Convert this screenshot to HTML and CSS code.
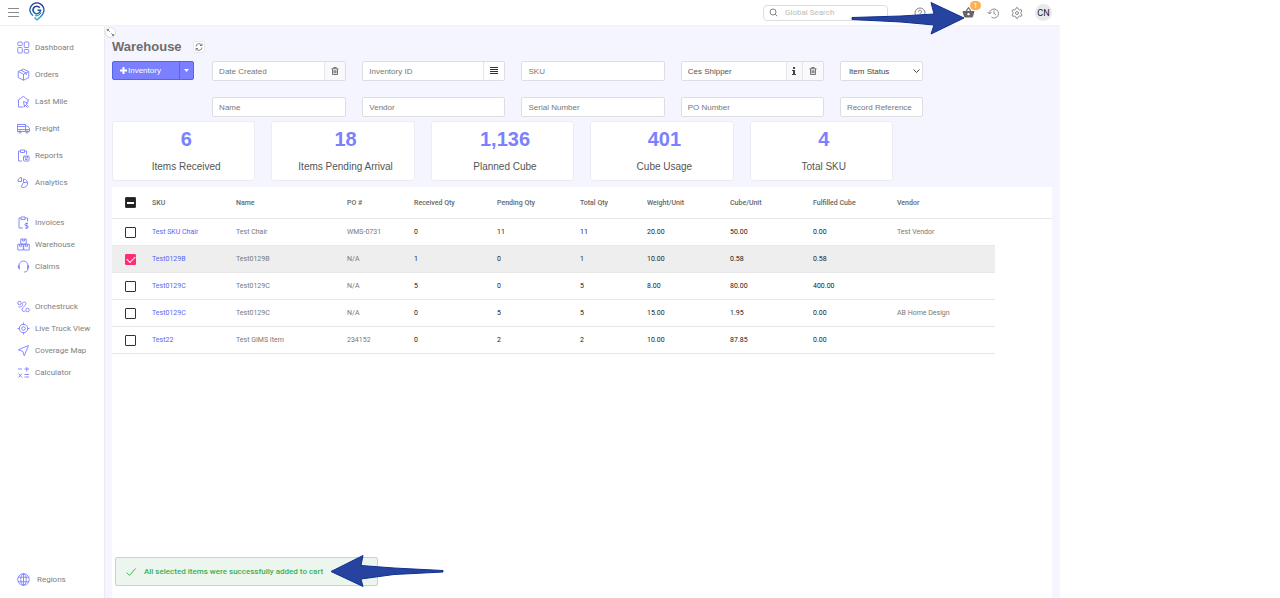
FILE: index.html
```html
<!DOCTYPE html>
<html lang="en">
<head>
    <meta charset="UTF-8">
    <meta name="viewport" content="width=device-width, initial-scale=1.0">
    <title>Warehouse</title>
    <link rel="stylesheet" href="styles.css">
</head>
<body>
    <div class="app">
        <!-- Top bar -->
        <header class="topbar">
            <button class="icon-btn menu-btn" aria-label="Menu">
                <svg width="11" height="9" viewBox="0 0 11 9" stroke="#8a8a8a" stroke-width="1"><path d="M0 .5h11M0 4.5h11M0 8.5h11"/></svg>
            </button>
            <a href="#" class="logo" aria-label="Home">
                <svg width="16" height="19" viewBox="0 0 32 38" fill="none">
                    <defs>
                        <linearGradient id="logo-fill" gradientUnits="userSpaceOnUse" x1="16" y1="0" x2="16" y2="38">
                            <stop offset="0" stop-color="#1b2a8c"/>
                            <stop offset=".5" stop-color="#1c5cb0"/>
                            <stop offset="1" stop-color="#1fc0dc"/>
                        </linearGradient>
                    </defs>
                    <path d="M8 27.500A14 14 0 1 1 28.500 22C26 28 21 32 16 36l-5-5" stroke="url(#logo-fill)" stroke-width="2.600"/>
                    <path d="M21.500 11.500A7.500 7.500 0 1 0 23 16.500h-6" stroke="url(#logo-fill)" stroke-width="3.400"/>
                    <path d="M12 27.500c6 1 10-2 12-6" stroke="url(#logo-fill)" stroke-width="2"/>
                </svg>
            </a>
            <label class="search">
                <svg width="9" height="9" viewBox="0 0 18 18" fill="none" stroke="#777" stroke-width="1.800"><circle cx="8" cy="8" r="6"/><path d="M12.500 12.500L16.500 16.500"/></svg>
                <input type="text" placeholder="Global Search" aria-label="Global Search">
            </label>
            <div class="actions">
                <button class="icon-btn help-btn" aria-label="Help">
                    <svg width="12" height="12" viewBox="0 0 24 24" fill="none" stroke="#777" stroke-width="1.800"><circle cx="12" cy="12" r="10"/><path d="M9 9.500a3 3 0 1 1 4.500 2.500c-1 .7-1.500 1.200-1.500 2.500M12 16.500v2"/></svg>
                </button>
                <button class="icon-btn cart-btn" aria-label="Cart">
                    <svg width="13" height="13" viewBox="0 0 24 24" fill="#666"><path d="M17.200 9l-4.400-6.600a1 1 0 0 0-1.600 0L6.800 9H2c-.6 0-1 .5-1 1l2.600 9.500c.2.900 1 1.500 1.900 1.500h13c.9 0 1.700-.6 1.900-1.500L23 10c0-.6-.5-1-1-1zM9.200 9L12 4.800 14.800 9zM12 17.200a2.200 2.200 0 1 1 0-4.400 2.200 2.200 0 0 1 0 4.400z"/></svg>
                    <span class="badge">1</span>
                </button>
                <button class="icon-btn" aria-label="History">
                    <svg width="12" height="12" viewBox="0 0 24 24" fill="none" stroke="#777" stroke-width="1.700"><path d="M5 13A9 9 0 1 1 9 20.500M1 10l4 4 4-4M14 7v6l4 2.500"/></svg>
                </button>
                <button class="icon-btn" aria-label="Settings">
                    <svg width="12" height="12" viewBox="0 0 24 24" fill="none" stroke="#777" stroke-width="1.700"><path d="M9.500 4.500L10.500 1.500h3l1 3 2.800 1.500 3-.8 1.700 2.800-2 2.500v3l2 2.500-1.700 2.800-3-.8-2.800 1.500-1 3h-3l-1-3-2.800-1.500-3 .8L2 16l2-2.500v-3L2 8l1.700-2.800 3 .8z"/><circle cx="12" cy="12" r="3"/></svg>
                </button>
                <button class="avatar">CN</button>
            </div>
            <svg class="arrow arrow-cart" width="114" height="34" viewBox="0 0 114 34"><path d="M1 16.500L50 15 83 13 80 1.500 113 17 80 33 83 24 50 21 1 18.500z" fill="#26449f" stroke="#12308f"/></svg>
        </header>

        <!-- Sidebar -->
        <nav class="sidebar">
            <div class="nav-group nav-main">
                <a href="#"><svg viewBox="0 0 26 26"><rect x="1.500" y="2" width="9" height="7" rx="1.500"/><rect x="1.500" y="13" width="9" height="11" rx="1.500"/><rect x="14.500" y="2" width="9" height="11" rx="1.500"/><rect x="14.500" y="17" width="9" height="7" rx="1.500"/></svg>Dashboard</a>
                <a href="#"><svg viewBox="0 0 26 26"><path d="M13 2l10.500 5v12L13 24.500 2.500 19V7zM2.500 7L13 12.500 23.500 7M13 12.500v12M8 4.500L18.500 10v4"/></svg>Orders</a>
                <a href="#"><svg viewBox="0 0 26 26"><path d="M13 24H3V10L12.500 2.500 22 10v4M3 10H1M22 10h2"/><path d="M13 13l9 3-4 2 5 5-2 2-5-5-1 4z"/></svg>Last Mile</a>
                <a href="#"><svg viewBox="0 0 26 26"><path d="M1 5h16v14H1zM1 9h16M1 15h24M17 8h4l4 5v6h-8"/><circle cx="6" cy="20" r="2.300"/><circle cx="20" cy="20" r="2.300"/></svg>Freight</a>
                <a href="#"><svg viewBox="0 0 26 26"><path d="M10 24H3V4h4M15 4h4v7M7 2h8v5H7z"/><rect x="13" y="14" width="11" height="10" rx="1"/><path d="M16 14v4h5v-4M16 21h5"/></svg>Reports</a>
                <a href="#"><svg viewBox="0 0 26 26"><path d="M13 13V6a8.500 8.500 0 1 1-5 15.500z"/><path d="M13 13h8.500"/><path d="M9 11H2a7 7 0 0 1 7-8z"/></svg>Analytics</a>
            </div>
            <div class="nav-group nav-records">
                <a href="#"><svg viewBox="0 0 26 26"><path d="M12 24H4V4h4M16 4h5v7M8 2h8v5H8zM22 15h-4a2 2 0 0 0 0 4.500h2a2 2 0 0 1 0 4.500h-4M19.500 13v13"/></svg>Invoices</a>
                <a href="#"><svg viewBox="0 0 26 26"><path d="M7.500 2h11v10h-11zM1.500 12.500h11V24h-11zM13.500 12.500h11V24h-11zM11 2v4h4V2M5 12.500v4h4v-4M17 12.500v4h4v-4"/></svg>Warehouse</a>
                <a href="#"><svg viewBox="0 0 26 26"><path d="M4 16V11a9 9 0 0 1 18 0v5M22 18c0 4-3 6-8 6"/><path d="M4 10c-2 1-2.500 7 1 8zM22 10c2 1 2.500 7-1 8z"/></svg>Claims</a>
            </div>
            <div class="nav-group nav-tools">
                <a href="#"><svg viewBox="0 0 26 26"><circle cx="5" cy="6" r="3.500"/><circle cx="21" cy="20" r="3.500"/><path d="M3 14c5 0 8-1 8-5V7c0-4 7-4 7 0 0 5-8 7-8 12 0 4 4 5 6 3"/></svg>Orchestruck</a>
                <a href="#"><svg viewBox="0 0 26 26"><circle cx="13" cy="13" r="8.500"/><circle cx="13" cy="13" r="3.500"/><path d="M13 1v4M13 21v4M1 13h4M21 13h4"/></svg>Live Truck View</a>
                <a href="#"><svg viewBox="0 0 26 26"><path d="M23 3L2.500 11.500l9 3 3 9z"/></svg>Coverage Map</a>
                <a href="#"><svg viewBox="0 0 26 26"><path d="M2 6h8M15 6h9M19.500 2v9M3 15l7 8M10 15l-7 8M15 17h9M15 22h9"/></svg>Calculator</a>
            </div>
            <div class="nav-group nav-footer">
                <a href="#"><svg viewBox="0 0 26 26"><circle cx="13" cy="13" r="11.500"/><ellipse cx="13" cy="13" rx="5.500" ry="11.500"/><path d="M13 1.500v23M2.500 8.500h21M2.500 17.500h21"/></svg>Regions</a>
            </div>
        </nav>

        <!-- Page content -->
        <main class="content">
            <button class="expand-btn" aria-label="Expand">
                <svg width="7" height="7" viewBox="0 0 14 14" fill="none" stroke="#666" stroke-width="1.500"><path d="M1 4V1h3M1 1l4.500 4.500M13 10v3h-3M13 13L8.500 8.500"/></svg>
            </button>
            <div class="title-row">
                <h1>Warehouse</h1>
                <button class="refresh-btn" aria-label="Refresh">
                    <svg width="8" height="8" viewBox="0 0 16 16" fill="none" stroke="#666" stroke-width="1.700"><path d="M2 7a6 6 0 0 1 11-3M14 1v4h-4M14 9a6 6 0 0 1-11 3M2 15v-4h4"/></svg>
                </button>
            </div>

            <div class="filters">
                <div class="split-btn">
                    <button class="split-main"><svg width="7" height="7" viewBox="0 0 7 7" stroke="#fff" stroke-width="2"><path d="M3.500 0v7M0 3.500h7"/></svg>Inventory</button>
                    <button class="split-caret" aria-label="More inventory actions"><svg width="5" height="3" viewBox="0 0 5 3" fill="#fff"><path d="M0 0h5L2.500 3z"/></svg></button>
                </div>
                <div class="field">
                    <input type="text" placeholder="Date Created" aria-label="Date Created">
                    <button aria-label="Clear date"><svg width="8" height="8" viewBox="0 0 16 16" fill="none" stroke="#555" stroke-width="1.600"><path d="M1 3.500h14M5.500 3V1h5v2M3 4v11h10V4M6 6.500v6M8 6.500v6M10 6.500v6"/></svg></button>
                </div>
                <div class="field">
                    <input type="text" placeholder="Inventory ID" aria-label="Inventory ID">
                    <button class="white-btn" aria-label="Inventory list"><svg width="8" height="8" viewBox="0 0 8 8" stroke="#333" stroke-width="1"><path d="M0 .5h8M0 2.500h8M0 4.500h8M0 6.500h8"/></svg></button>
                </div>
                <div class="field"><input type="text" placeholder="SKU" aria-label="SKU"></div>
                <div class="field shipper">
                    <input type="text" value="Ces Shipper" aria-label="Shipper">
                    <button class="info-btn" aria-label="Shipper info"><svg width="4" height="8" viewBox="0 0 4 8" fill="#444"><path d="M1 0h2v2H1zM0 3h3v4h1v1H0V7h1V4H0z"/></svg></button>
                    <button aria-label="Clear shipper"><svg width="8" height="8" viewBox="0 0 16 16" fill="none" stroke="#555" stroke-width="1.600"><path d="M1 3.500h14M5.500 3V1h5v2M3 4v11h10V4M6 6.500v6M8 6.500v6M10 6.500v6"/></svg></button>
                </div>
                <div class="field select-field">
                    <select aria-label="Item Status"><option>Item Status</option></select>
                    <svg class="chevron" width="7" height="4" viewBox="0 0 7 4" fill="none" stroke="#444"><path d="M.5.5l3 3 3-3"/></svg>
                </div>
                <div class="field second-row"><input type="text" placeholder="Name" aria-label="Name"></div>
                <div class="field"><input type="text" placeholder="Vendor" aria-label="Vendor"></div>
                <div class="field"><input type="text" placeholder="Serial Number" aria-label="Serial Number"></div>
                <div class="field"><input type="text" placeholder="PO Number" aria-label="PO Number"></div>
                <div class="field"><input type="text" placeholder="Record Reference" aria-label="Record Reference"></div>
            </div>

            <div class="stats">
                <div class="stat"><strong>6</strong><span>Items Received</span></div>
                <div class="stat"><strong>18</strong><span>Items Pending Arrival</span></div>
                <div class="stat"><strong>1,136</strong><span>Planned Cube</span></div>
                <div class="stat"><strong>401</strong><span>Cube Usage</span></div>
                <div class="stat"><strong>4</strong><span>Total SKU</span></div>
            </div>

            <section class="panel">
                <table>
                    <colgroup>
                        <col class="col-check"><col class="col-sku"><col class="col-name"><col class="col-narrow"><col class="col-num"><col class="col-num"><col class="col-narrow"><col class="col-num"><col class="col-num"><col class="col-sku"><col class="col-vendor"><col>
                    </colgroup>
                    <thead>
                        <tr>
                            <th><input type="checkbox" class="partial" aria-label="Select all"></th>
                            <th>SKU</th><th>Name</th><th>PO #</th><th>Received Qty</th><th>Pending Qty</th><th>Total Qty</th><th>Weight/Unit</th><th>Cube/Unit</th><th>Fulfilled Cube</th><th>Vendor</th><th></th>
                        </tr>
                    </thead>
                    <tbody>
                        <tr>
                            <td><input type="checkbox" aria-label="Select Test SKU Chair"></td>
                            <td><a href="#">Test SKU Chair</a></td><td>Test Chair</td><td>WMS-0731</td>
                            <td class="num">0</td><td class="num">11</td><td class="num">11</td><td class="num">20.00</td><td class="num">50.00</td><td class="num">0.00</td><td>Test Vendor</td>
                        </tr>
                        <tr class="selected">
                            <td><input type="checkbox" checked aria-label="Select Test0129B"></td>
                            <td><a href="#">Test0129B</a></td><td>Test0129B</td><td>N/A</td>
                            <td class="num">1</td><td class="num">0</td><td class="num">1</td><td class="num">10.00</td><td class="num">0.58</td><td class="num">0.58</td><td></td>
                        </tr>
                        <tr>
                            <td><input type="checkbox" aria-label="Select Test0129C"></td>
                            <td><a href="#">Test0129C</a></td><td>Test0129C</td><td>N/A</td>
                            <td class="num">5</td><td class="num">0</td><td class="num">5</td><td class="num">8.00</td><td class="num">80.00</td><td class="num">400.00</td><td></td>
                        </tr>
                        <tr>
                            <td><input type="checkbox" aria-label="Select Test0129C"></td>
                            <td><a href="#">Test0129C</a></td><td>Test0129C</td><td>N/A</td>
                            <td class="num">0</td><td class="num">5</td><td class="num">5</td><td class="num">15.00</td><td class="num">1.95</td><td class="num">0.00</td><td>AB Home Design</td>
                        </tr>
                        <tr>
                            <td><input type="checkbox" aria-label="Select Test22"></td>
                            <td><a href="#">Test22</a></td><td>Test GIMS Item</td><td>234152</td>
                            <td class="num">0</td><td class="num">2</td><td class="num">2</td><td class="num">10.00</td><td class="num">87.85</td><td class="num">0.00</td><td></td>
                        </tr>
                    </tbody>
                </table>

                <!-- Cart message -->
                <div class="toast" role="status">
                    <svg width="10" height="8" viewBox="0 0 10 8" fill="none" stroke="#3fb65f"><path d="M.5 4.500l3 3 6-7"/></svg>
                    <span>All selected items were successfully added to cart</span>
                    <svg class="arrow arrow-toast" width="114" height="34" viewBox="0 0 114 34"><path d="M113 16.500L64 14 31 11.500 33 1.500 1 17.500 33 32.500 31 25 64 20.500 113 18z" fill="#26449f" stroke="#12308f"/></svg>
                </div>
            </section>
        </main>
    </div>
</body>
</html>
```
FILE: styles.css
```css
* {
    box-sizing: border-box;
}
body {
    margin: 0;
    padding-right: 220px;
    background: #fff;
    font-family: Roboto, sans-serif;
    font-size: 8px;
    color: #777;
}
button, input, select {
    font-family: inherit;
    font-size: inherit;
    color: inherit;
    margin: 0;
    padding: 0;
}
button {
    cursor: pointer;
}
a {
    text-decoration: none;
}
svg {
    display: block;
    flex: none;
}
.app {
    display: grid;
    grid-template-columns: 104px 1fr;
    grid-template-rows: 26px 1fr;
    min-height: 100vh;
}

/* Top bar */
.topbar {
    grid-column: 1 / 3;
    position: relative;
    display: flex;
    align-items: center;
    padding: 0 8px;
    border-bottom: 1px solid #f0f0f5;
}
.icon-btn {
    position: relative;
    border: none;
    background: none;
}
.logo {
    margin-left: 10px;
    padding-bottom: 3px;
}
.search {
    display: flex;
    align-items: center;
    gap: 7px;
    width: 125px;
    height: 16px;
    margin-left: auto;
    padding: 0 5px;
    border: 1px solid #ddd;
    border-radius: 4px;
}
.search input {
    flex: 1;
    min-width: 0;
    border: none;
    outline: none;
    background: none;
}
.search input::placeholder {
    color: #bbb;
}
.actions {
    display: flex;
    align-items: center;
    gap: 12px;
    margin-left: 26px;
}
.help-btn {
    margin-right: 24px;
}
.badge {
    position: absolute;
    left: 8px;
    top: -5px;
    width: 11px;
    height: 9px;
    border-radius: 5px;
    background: #ffae52;
    color: #fff;
    font-size: 8px;
    line-height: 9px;
    text-align: center;
}
.avatar {
    width: 17px;
    height: 17px;
    border: none;
    border-radius: 50%;
    background: #e9e9e9;
    color: #222;
    font-size: 9px;
}
.arrow {
    position: absolute;
    pointer-events: none;
    z-index: 2;
}
.arrow-cart {
    right: 95px;
    top: 1px;
}

/* Sidebar */
.sidebar {
    display: flex;
    flex-direction: column;
    padding: 8px 0;
}
.nav-group a {
    display: flex;
    align-items: center;
    gap: 5px;
    height: 22px;
    padding-left: 17px;
    color: #808080;
}
.nav-group svg {
    width: 13px;
    height: 13px;
    fill: none;
    stroke: #7a80fb;
    stroke-width: 1.8;
}
.nav-main a {
    height: 27px;
}
.nav-records {
    margin-top: 15px;
}
.nav-tools {
    margin-top: 18px;
}
.nav-footer {
    margin-top: auto;
}
.nav-footer a {
    gap: 7px;
}

/* Content */
.content {
    position: relative;
    display: flex;
    flex-direction: column;
    min-width: 0;
    padding: 13px 8px 0 7px;
    border-left: 1px solid #e9e9f4;
    background: #f5f5ff;
    font-family: "Liberation Sans", Arial, sans-serif;
}
.expand-btn {
    position: absolute;
    left: 0;
    top: 1px;
    display: grid;
    place-items: center;
    width: 11px;
    height: 11px;
    border: 1px solid #ddd;
    border-radius: 50%;
    background: #fff;
}
.title-row {
    display: flex;
    align-items: center;
    gap: 11px;
}
h1 {
    margin: 0;
    font-size: 13px;
    line-height: 16px;
    color: #6d6d6d;
}
.refresh-btn {
    display: grid;
    place-items: center;
    width: 12px;
    height: 12px;
    border: 1px solid #e8e8e8;
    border-radius: 2px;
    background: #fff;
}

/* Filters */
.filters {
    display: grid;
    grid-template-columns:
        minmax(0, 84fr) minmax(0, 134fr) minmax(0, 143fr)
        minmax(0, 143fr) minmax(0, 143fr) minmax(0, 83fr);
    gap: 16px;
    margin: 6px 129px 0 0;
}
.split-btn {
    display: flex;
    height: 19px;
    margin-right: 2px;
    border: 1px solid #5367e0;
    border-radius: 2px;
    background: #7a80ff;
    color: #fff;
}
.split-btn button {
    display: flex;
    align-items: center;
    border: none;
    background: none;
}
.split-btn .split-main {
    flex: 1;
    gap: 1px;
    padding-left: 7px;
}
.split-btn .split-caret {
    justify-content: center;
    width: 14px;
    border-left: 1px solid #5367e0;
}
.field {
    position: relative;
    display: flex;
    height: 20px;
    border: 1px solid #dedee2;
    border-radius: 2px;
    background: #fff;
}
.second-row {
    grid-column: 2;
}
.field input {
    flex: 1;
    min-width: 0;
    padding: 0 6px;
    border: none;
    background: none;
}
.field input::placeholder {
    color: #777;
}
.field button {
    display: grid;
    place-items: center;
    width: 21px;
    border: none;
    border-left: 1px solid #e6e6ea;
    background: #f9f9fb;
}
.field .white-btn {
    background: #fff;
}
.field .info-btn {
    width: 16px;
}
.shipper input {
    color: #555;
}
.select-field select {
    flex: 1;
    min-width: 0;
    appearance: none;
    padding-left: 8px;
    border: none;
    background: none;
    color: #444;
}
.chevron {
    position: absolute;
    right: 2px;
    top: 7px;
    pointer-events: none;
}

/* Stats */
.stats {
    display: grid;
    grid-template-columns: repeat(5, 1fr);
    gap: 16px;
    margin: 4px 159px 0 0;
}
.stat {
    display: flex;
    flex-direction: column;
    align-items: center;
    gap: 12px;
    height: 60px;
    padding: 7px 0 0 5px;
    border: 1px solid #ececf4;
    border-radius: 3px;
    background: #fff;
    font-size: 10px;
    line-height: 12px;
    color: #555;
}
.stat strong {
    font-size: 20px;
    line-height: 20px;
    color: #7a80ff;
}

/* Items table */
.panel {
    position: relative;
    flex: 1;
    margin-top: 6px;
    background: #fff;
    font-family: Roboto, sans-serif;
}
table {
    width: 100%;
    table-layout: fixed;
    border-collapse: separate;
    border-spacing: 0;
    font-size: 7px;
}
.col-check { width: 40px; }
.col-sku { width: 84px; }
.col-name { width: 111px; }
.col-narrow { width: 67px; }
.col-num { width: 83px; }
.col-vendor { width: 98px; }
th, td {
    height: 27px;
    padding: 0;
    border-bottom: 1px solid #e8e8e8;
    text-align: left;
    white-space: nowrap;
}
th {
    height: 32px;
    font-weight: 500;
    color: #666;
}
td a {
    color: #5c63f5;
}
.num {
    color: #222;
}
.selected td {
    background: #eee;
}
th:first-child, td:first-child {
    padding-left: 13px;
}
input[type="checkbox"] {
    appearance: none;
    display: grid;
    place-items: center;
    width: 11px;
    height: 11px;
    border: 1px solid #333;
    border-radius: 1px;
    background: #fff;
}
input.partial[type="checkbox"] {
    background: #222;
}
input.partial::before {
    content: "";
    width: 7px;
    height: 2px;
    background: #fff;
}
input[type="checkbox"]:checked {
    border-color: #ff2e74;
    background: #ff2e74;
}
input:checked::before {
    content: "";
    width: 7px;
    height: 4px;
    margin-bottom: 2px;
    border-left: 1px solid #fff;
    border-bottom: 1px solid #fff;
    transform: rotate(-45deg);
}

/* Toast */
.toast {
    position: absolute;
    left: 3px;
    bottom: 12px;
    display: flex;
    align-items: center;
    gap: 8px;
    width: 263px;
    height: 29px;
    padding-left: 10px;
    border: 1px solid #b4e0be;
    border-radius: 2px;
    background: #edf6ee;
    color: #35b055;
    font-weight: 500;
}
.arrow-toast {
    left: 214px;
    top: -4px;
}
```
